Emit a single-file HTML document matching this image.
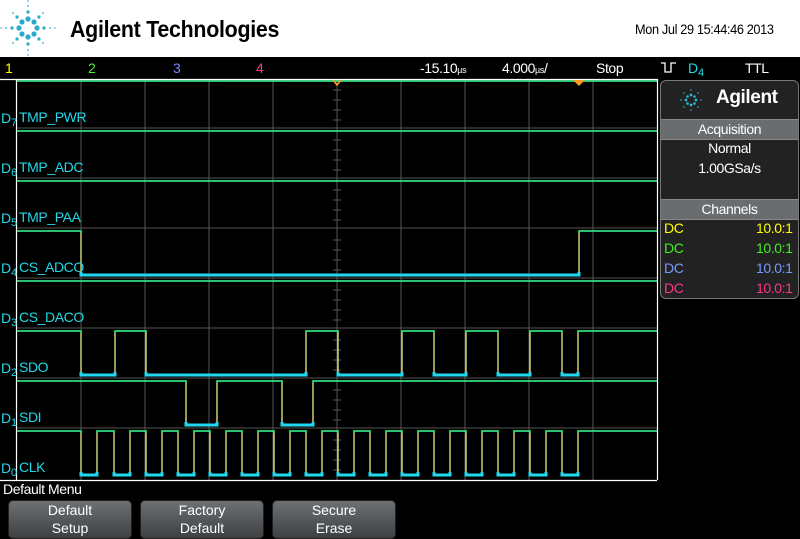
<!DOCTYPE html>
<html><head><meta charset="utf-8"><style>
*{margin:0;padding:0}
body{width:800px;height:539px;background:#000;position:relative;overflow:hidden;font-family:"Liberation Sans Narrow","Liberation Sans",sans-serif;color:#fff}
.t{position:absolute;white-space:nowrap;font-size:14px;line-height:16px;letter-spacing:-0.4px}
.hdr{position:absolute;left:0;top:0;width:800px;height:57px;background:#fff;border-bottom:2px solid #000}
.btn{position:absolute;top:500px;width:122px;height:37px;border-radius:5px;background:linear-gradient(#6e7174,#3d4043);border:1px solid #222;text-align:center;font-size:14px;line-height:18px;color:#fff}
.cy{color:#22d8e8}
.s{position:absolute;font-size:11px;line-height:11px;left:10px;top:8px;z-index:5}
</style></head><body>
<div class="hdr"></div>
<svg style="position:absolute;left:0;top:0" width="60" height="57">
<g fill="#2aaacc">
<circle cx="28" cy="19" r="2.6"/><circle cx="28" cy="37" r="2.6"/><circle cx="19" cy="28" r="2.6"/><circle cx="37" cy="28" r="2.6"/>
<circle cx="22" cy="22" r="2.6"/><circle cx="34" cy="22" r="2.6"/><circle cx="22" cy="34" r="2.6"/><circle cx="34" cy="34" r="2.6"/>
<circle cx="28" cy="12" r="1.6"/><circle cx="28" cy="44" r="1.6"/><circle cx="12" cy="28" r="1.6"/><circle cx="44" cy="28" r="1.6"/>
<circle cx="17" cy="17" r="1.6"/><circle cx="39" cy="17" r="1.6"/><circle cx="17" cy="39" r="1.6"/><circle cx="39" cy="39" r="1.6"/>
<circle cx="28" cy="6" r=".9"/><circle cx="28" cy="50" r=".9"/><circle cx="6" cy="28" r=".9"/><circle cx="50" cy="28" r=".9"/>
<circle cx="13" cy="13" r=".9"/><circle cx="43" cy="13" r=".9"/><circle cx="13" cy="43" r=".9"/><circle cx="43" cy="43" r=".9"/>
<circle cx="28" cy="1" r=".7"/><circle cx="28" cy="55" r=".7"/><circle cx="1" cy="28" r=".7"/><circle cx="55" cy="28" r=".7"/>
</g></svg>
<div class="t" style="left:70px;top:15px;font-family:'Liberation Sans',sans-serif;font-weight:bold;font-size:23px;line-height:28px;color:#000;letter-spacing:-0.3px;transform:scaleX(.93);transform-origin:left">Agilent Technologies</div>
<div class="t" style="left:635px;top:21px;color:#000;font-size:14px;transform:scaleX(.91);transform-origin:left">Mon Jul 29 15:44:46 2013</div>

<div class="t" style="left:5px;top:60px;color:#ffff00">1</div>
<div class="t" style="left:88px;top:60px;color:#44ee33">2</div>
<div class="t" style="left:173px;top:60px;color:#7788ff">3</div>
<div class="t" style="left:256px;top:60px;color:#ff3388">4</div>
<div class="t" style="left:420px;top:60px">-15.10<span style="font-size:9px">µs</span></div>
<div class="t" style="left:502px;top:60px">4.000<span style="font-size:9px">µs</span>/</div>
<div class="t" style="left:596px;top:60px">Stop</div>
<svg style="position:absolute;left:661px;top:62px" width="16" height="12"><path d="M0,1H4V10H10V1H15" fill="none" stroke="#fff" stroke-width="1.3"/></svg>
<div class="t cy" style="left:688px;top:60px">D<span class="s">4</span></div>
<div class="t" style="left:745px;top:60px">TTL</div>

<svg style="position:absolute;left:0;top:0" width="800" height="539">
<defs>
<clipPath id="hi"><rect x="0" y="79" width="660" height="4"/><rect x="0" y="129" width="660" height="4"/><rect x="0" y="179" width="660" height="4"/><rect x="0" y="229" width="660" height="4"/><rect x="0" y="279" width="660" height="4"/><rect x="0" y="329" width="660" height="4"/><rect x="0" y="379" width="660" height="4"/><rect x="0" y="429" width="660" height="4"/></clipPath>
<clipPath id="lo"><rect x="0" y="272" width="660" height="6"/><rect x="0" y="372" width="660" height="6"/><rect x="0" y="422" width="660" height="6"/><rect x="0" y="472" width="660" height="6"/></clipPath>
<g id="sig" fill="none">
<path d="M16,81H657M16,131H657M16,181H657M16,281H657"/>
<path d="M16,231H81V275H579V231H657"/>
<path d="M16,331H81V375H115V331H146V375H306V331H338V375H402V331H434V375H466V331H498V375H530V331H562V375H578V331H657"/>
<path d="M16,381H186V425H217V381H282V425H313V381H657"/>
<path d="M16,431H81V475H97V431H114V475H130V431H146V475H162V431H178V475H194V431H210V475H226V431H242V475H258V431H274V475H290V431H306V475H322V431H338V475H354V431H370V475H386V431H402V475H418V431H434V475H450V431H466V475H482V431H498V475H514V431H530V475H546V431H562V475H578V431H657"/>
</g>
</defs>
<g stroke="#555" stroke-width="1">
<path d="M81,80V480M145,80V480M209,80V480M273,80V480M337,80V480M401,80V480M465,80V480M529,80V480M593,80V480"/>
<path d="M16,128H657M16,178H657M16,228H657M16,278H657M16,328H657M16,378H657M16,428H657"/>
<path d="M333,90H341M333,100H341M333,110H341M333,120H341M333,140H341M333,150H341M333,160H341M333,170H341M333,190H341M333,200H341M333,210H341M333,220H341M333,240H341M333,250H341M333,260H341M333,270H341M333,290H341M333,300H341M333,310H341M333,320H341M333,340H341M333,350H341M333,360H341M333,370H341M333,390H341M333,400H341M333,410H341M333,420H341M333,440H341M333,450H341M333,460H341M333,470H341"/>
</g>
<use href="#sig" stroke="#ffff88" stroke-width="1.2"/>
<use href="#sig" stroke="#22ee88" stroke-width="1.5" clip-path="url(#hi)"/>
<use href="#sig" stroke="#22d8f0" stroke-width="3" clip-path="url(#lo)"/>
<path d="M16.5,80V480M0,79.5H657.5V480M0,480.5H657" stroke="#fff" stroke-width="1.2" fill="none"/>
<path d="M333,80L337,85L341,80" stroke="#ff9922" stroke-width="1.5" fill="none"/>
<path d="M573,80L579,86L585,80Z" fill="#ff9922"/>
</svg>

<div class="t cy" style="left:1px;top:110px">D<span class="s">7</span></div><div class="t cy" style="left:19px;top:109px">TMP_PWR</div>
<div class="t cy" style="left:1px;top:160px">D<span class="s">6</span></div><div class="t cy" style="left:19px;top:159px">TMP_ADC</div>
<div class="t cy" style="left:1px;top:210px">D<span class="s">5</span></div><div class="t cy" style="left:19px;top:209px">TMP_PAA</div>
<div class="t cy" style="left:1px;top:260px">D<span class="s">4</span></div><div class="t cy" style="left:19px;top:259px">CS_ADCO</div>
<div class="t cy" style="left:1px;top:310px">D<span class="s">3</span></div><div class="t cy" style="left:19px;top:309px">CS_DACO</div>
<div class="t cy" style="left:1px;top:360px">D<span class="s">2</span></div><div class="t cy" style="left:19px;top:359px">SDO</div>
<div class="t cy" style="left:1px;top:410px">D<span class="s">1</span></div><div class="t cy" style="left:19px;top:409px">SDI</div>
<div class="t cy" style="left:1px;top:460px">D<span class="s">0</span></div><div class="t cy" style="left:19px;top:459px">CLK</div>

<div style="position:absolute;left:660px;top:80px;width:137px;height:217px;background:#222;border:1px solid #777;border-radius:6px"></div>
<svg style="position:absolute;left:676px;top:86px" width="30" height="28"><g fill="#2ab8dd">
<circle cx="15" cy="9" r="1.4"/><circle cx="15" cy="19" r="1.4"/><circle cx="10" cy="14" r="1.4"/><circle cx="20" cy="14" r="1.4"/>
<circle cx="11.5" cy="10.5" r="1.3"/><circle cx="18.5" cy="10.5" r="1.3"/><circle cx="11.5" cy="17.5" r="1.3"/><circle cx="18.5" cy="17.5" r="1.3"/>
<circle cx="15" cy="4" r=".8"/><circle cx="15" cy="24" r=".8"/><circle cx="5" cy="14" r=".8"/><circle cx="25" cy="14" r=".8"/>
<circle cx="8" cy="7" r=".8"/><circle cx="22" cy="7" r=".8"/><circle cx="8" cy="21" r=".8"/><circle cx="22" cy="21" r=".8"/></g></svg>
<div class="t" style="left:716px;top:87px;font-family:'Liberation Sans',sans-serif;font-weight:bold;font-size:19px;line-height:22px">Agilent</div>
<div style="position:absolute;left:661px;top:119px;width:137px;height:19px;background:#6a6d70;border-top:1px solid #888;border-bottom:1px solid #888"></div>
<div class="t" style="left:661px;width:137px;text-align:center;top:121px">Acquisition</div>
<div class="t" style="left:661px;width:137px;text-align:center;top:140px">Normal</div>
<div class="t" style="left:661px;width:137px;text-align:center;top:160px">1.00GSa/s</div>
<div style="position:absolute;left:661px;top:199px;width:137px;height:19px;background:#6a6d70;border-top:1px solid #888;border-bottom:1px solid #888"></div>
<div class="t" style="left:661px;width:137px;text-align:center;top:201px">Channels</div>
<div class="t" style="left:664px;top:220px;color:#ffff00">DC</div><div class="t" style="left:756px;top:220px;color:#ffff00">10.0:1</div>
<div class="t" style="left:664px;top:240px;color:#44ee22">DC</div><div class="t" style="left:756px;top:240px;color:#44ee22">10.0:1</div>
<div class="t" style="left:664px;top:260px;color:#7799ff">DC</div><div class="t" style="left:756px;top:260px;color:#7799ff">10.0:1</div>
<div class="t" style="left:664px;top:280px;color:#ff3388">DC</div><div class="t" style="left:756px;top:280px;color:#ff3388">10.0:1</div>

<div class="t" style="left:3px;top:481px">Default Menu</div>
<div class="btn" style="left:8px">Default<br>Setup</div>
<div class="btn" style="left:140px">Factory<br>Default</div>
<div class="btn" style="left:272px">Secure<br>Erase</div>
</body></html>
